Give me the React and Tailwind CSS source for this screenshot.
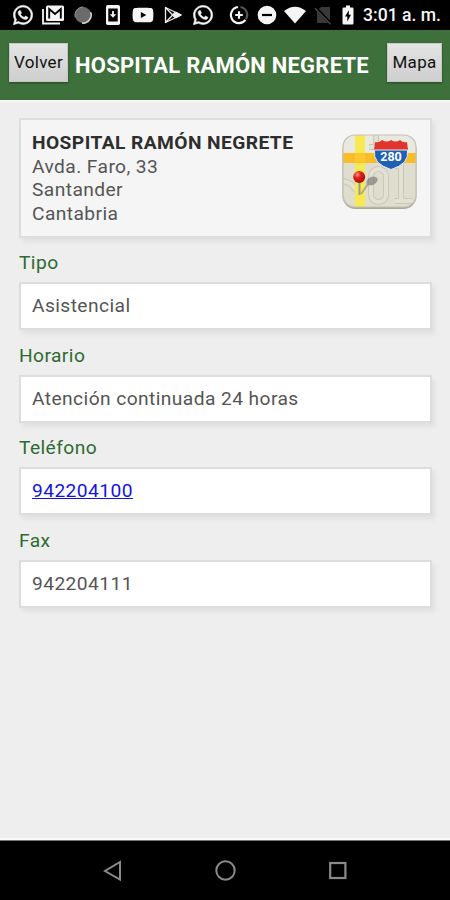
import React from "react";
import { FaWhatsapp, FaYoutube } from "react-icons/fa";

const fields = [
  { label: "Tipo", value: "Asistencial" },
  { label: "Horario", value: "Atención continuada 24 horas" },
  { label: "Teléfono", value: "942204100", phone: true },
  { label: "Fax", value: "942204111" },
];

const GmailIcon = () => (
  <svg width="22" height="22" viewBox="0 0 22 22">
    <path d="M1 5v14.5h17" fill="none" stroke="#f5f5f5" strokeWidth="1.8" />
    <rect x="4" y="1.5" width="18" height="15.5" rx="1.5" fill="#f5f5f5" />
    <path d="M7.2 14.5V5l5.8 5 5.8-5v9.5" fill="none" stroke="#000" strokeWidth="1.9" />
  </svg>
);

const SyncCircleIcon = () => (
  <svg width="20" height="20" viewBox="0 0 20 20">
    <circle cx="10" cy="10" r="8" fill="#6b6b6b" />
    <path d="M17.6 7.2A8 8 0 0 1 9 18" fill="none" stroke="#d4d4d4" strokeWidth="1.6" />
    <path d="M2.4 12.5A8 8 0 0 1 10 2" fill="none" stroke="#999" strokeWidth="1" />
  </svg>
);

const UpdateIcon = () => (
  <svg width="16" height="20" viewBox="0 0 16 20">
    <rect x="1" y="0" width="14" height="20" rx="1.8" fill="#f5f5f5" />
    <rect x="3.3" y="3.5" width="9.4" height="13" fill="#000" />
    <path d="M8 6v5" stroke="#f5f5f5" strokeWidth="1.8" />
    <path d="M4.7 9.2h6.6L8 12.8z" fill="#f5f5f5" />
  </svg>
);

const PlayStoreIcon = () => (
  <svg width="20" height="20" viewBox="0 0 20 20" fill="none" stroke="#eee" strokeWidth="1.3" strokeLinejoin="round">
    <path d="M2.5 2.5 18 10 2.5 17.5z" />
    <path d="M2.5 2.5 12.5 13M2.5 17.5 12.5 7" />
    <path d="M9.5 10 13 7.4 18 10l-5 2.6z" fill="#eee" />
  </svg>
);

const DataSaverIcon = () => (
  <svg width="20" height="20" viewBox="0 0 20 20" fill="none">
    <path d="M11.5 2A8.1 8.1 0 0 1 17 14.2" stroke="#555" strokeWidth="2.2" />
    <path d="M9 2A8.1 8.1 0 1 0 16.5 14.9" stroke="#f5f5f5" strokeWidth="2.2" />
    <path d="M10 6.2v7.6M6.2 10h7.6" stroke="#f5f5f5" strokeWidth="2.2" />
  </svg>
);

const DoNotDisturbIcon = () => (
  <svg width="20" height="20" viewBox="0 0 20 20">
    <circle cx="10" cy="10" r="9.3" fill="#f5f5f5" />
    <path d="M5 10h10" stroke="#000" strokeWidth="2.2" />
  </svg>
);

const WifiIcon = () => (
  <svg width="24" height="20" viewBox="0 0 24 20">
    <path d="M1 6Q12-2.5 23 6L12 18.5z" fill="#f5f5f5" />
  </svg>
);

const NoSimIcon = () => (
  <svg width="18" height="20" viewBox="0 0 18 20">
    <path d="M7 2h9v16H3V6z" fill="#393939" />
    <path d="M1 2l16 17" stroke="#000" strokeWidth="3" />
    <path d="M1 3.2l15.5 16" stroke="#484848" strokeWidth="1.5" />
  </svg>
);

const BatteryIcon = () => (
  <svg width="12" height="20" viewBox="0 0 12 20">
    <path d="M4 .5h4v2h2.3q1.2 0 1.2 1.2v14.6q0 1.2-1.2 1.2H1.7q-1.2 0-1.2-1.2V3.7q0-1.2 1.2-1.2H4z" fill="#f5f5f5" />
    <path d="M6.8 5.2 3 11.6h2.3v4.9L9 9.8H6.8z" fill="#000" />
  </svg>
);

const MapIcon = () => (
  <svg className="mt-[13px] mr-[11px] shrink-0 tracking-normal" width="78" height="78" viewBox="0 0 78 78">
    <defs>
      <clipPath id="tile">
        <rect x="2" y="2" width="73" height="72" rx="12" />
      </clipPath>
      <radialGradient id="pin" cx="0.35" cy="0.3" r="0.7">
        <stop offset="0" stopColor="#ff9a90" />
        <stop offset="0.4" stopColor="#e3231b" />
        <stop offset="1" stopColor="#a80d0a" />
      </radialGradient>
    </defs>
    <rect x="1.5" y="3" width="74" height="73" rx="13" fill="#aaa996" />
    <g clipPath="url(#tile)">
      <rect width="78" height="78" fill="#dfddcd" />
      <path d="M0 0h78v20H0z" fill="#eae9df" />
      <g fill="none" stroke="#c9c7b8" strokeWidth="6">
        <rect x="30" y="36" width="15" height="33" rx="7.5" />
        <path d="M50 33h10v35h-6M60 68h12M0 47l10 4 10 12M28 14h7V0" />
      </g>
      <g fill="none" stroke="#e3e1d4" strokeWidth="4">
        <rect x="30" y="36" width="15" height="33" rx="7.5" />
        <path d="M50 33h10v35h-6M60 68h12M0 47l10 4 10 12M28 14h7V0" />
      </g>
      <path d="M14 0h10v78H14z" fill="#f7e951" />
      <path d="M0 20h78v10H0z" fill="#f9bd25" />
      <path d="M14 20h10v10H14z" fill="#fbc92f" />
    </g>
    <rect x="2" y="2" width="73" height="72" rx="12" fill="none" stroke="#c4c2b4" strokeWidth="1.2" />
    <path d="M34 9q4 1 7-2 5 3 9 0 5 3 9 0 3 3 7 2l1 8H33z" fill="#e0352c" />
    <path d="M33.500 17h33q1 7-3 12-5 5-13.500 7.500-8.500-2.500-13.500-7.500-4-5-3-12z" fill="#1f5fb4" stroke="#e8edf3" strokeWidth="1" />
    <text x="50" y="28" textAnchor="middle" fill="#fff" fontFamily="Roboto, sans-serif" fontSize="12.500" fontWeight="700">
      280
    </text>
    <ellipse cx="31" cy="48" rx="6" ry="4" fill="#777" opacity="0.65" transform="rotate(-25 31 48)" />
    <path d="M20 61 27 51" stroke="#888" strokeWidth="2" opacity="0.6" />
    <path d="M18.500 47v15" stroke="#999" strokeWidth="2" />
    <circle cx="18.200" cy="44" r="6" fill="url(#pin)" />
  </svg>
);

const StatusBar = () => (
  <div className="flex h-[30px] shrink-0 items-center bg-black pl-2 text-neutral-100">
    <div className="grid w-[210px] grid-cols-7 place-items-center">
      <FaWhatsapp size={22} stroke="currentColor" strokeWidth={14} />
      <GmailIcon />
      <SyncCircleIcon />
      <UpdateIcon />
      <FaYoutube size={22} />
      <PlayStoreIcon />
      <FaWhatsapp size={22} stroke="currentColor" strokeWidth={14} />
    </div>
    <div className="ml-[7px] grid w-[112px] grid-cols-4 place-items-center">
      <DataSaverIcon />
      <DoNotDisturbIcon />
      <WifiIcon />
      <NoSimIcon />
    </div>
    <div className="ml-[5px]">
      <BatteryIcon />
    </div>
    <span className="ml-[9px] pt-px text-[17.600px] font-medium whitespace-nowrap">3:01 a. m.</span>
  </div>
);

const HeaderButton = ({ children, className }) => (
  <button
    className={`h-[39px] shrink-0 border border-[#c4cbc4] bg-linear-to-b from-[#e4e4e4] to-[#cecece] pt-px text-[17px] tracking-[0.3px] text-[#111] shadow-[0_1px_2px_rgba(0,0,0,0.4)] ${className}`}
  >
    {children}
  </button>
);

const Header = () => (
  <header className="flex h-[70px] shrink-0 items-start bg-[#3d703b] pt-[13px] pl-[9px]">
    <HeaderButton className="w-[59px]">Volver</HeaderButton>
    <h1 className="mt-[9px] ml-[7px] w-[313px] text-[22px] leading-7 font-bold tracking-[0.220px] whitespace-nowrap text-white">
      HOSPITAL RAMÓN NEGRETE
    </h1>
    <HeaderButton className="-ml-px w-[55px]">Mapa</HeaderButton>
  </header>
);

const App = () => {
  return (
    <div className="flex h-[900px] w-[450px] flex-col overflow-hidden bg-[#eee] font-['Roboto',sans-serif]">
      <StatusBar />
      <Header />
      <main className="flex-1 border-t-2 border-b-2 border-[#f8f8f8] px-[19px] pt-4 text-[19.200px] tracking-[0.420px] text-[#555]">
        <section className="flex h-[120px] w-[413px] justify-between border-2 border-[#ddd] bg-[#f5f5f5] pl-[11px] shadow-[3px_4px_5px_rgba(0,0,0,0.06)]">
          <div className="pt-[11px] leading-[23.700px]">
            <p className="font-bold text-[#2e2e2e]">HOSPITAL RAMÓN NEGRETE</p>
            <p>Avda. Faro, 33</p>
            <p>Santander</p>
            <p>Cantabria</p>
          </div>
          <MapIcon />
        </section>
        {fields.map((field) => (
          <section key={field.label} className="h-[92.600px] pt-[12px]">
            <h2 className="h-[32px] leading-[25px] text-[#2f6a31]">{field.label}</h2>
            <div className="flex h-[48px] w-[413px] items-center border-2 border-[#ddd] bg-white pt-px pl-[11px] shadow-[3px_4px_5px_rgba(0,0,0,0.06)]">
              {field.phone ? (
                <a href={`tel:${field.value}`} className="text-[#1414dc] underline">
                  {field.value}
                </a>
              ) : (
                field.value
              )}
            </div>
          </section>
        ))}
      </main>
      <nav className="flex h-[60px] shrink-0 items-center justify-center gap-[92px] border-t border-[#777] bg-black">
        <svg width="20" height="22" viewBox="0 0 20 22" fill="none" stroke="#8a8a8a" strokeWidth="2">
          <path d="M18 2v17.500L3 11z" />
        </svg>
        <svg width="22" height="22" viewBox="0 0 22 22" fill="none" stroke="#8a8a8a" strokeWidth="2">
          <circle cx="11.500" cy="10.500" r="9.200" />
        </svg>
        <svg width="20" height="22" viewBox="0 0 20 22" fill="none" stroke="#8a8a8a" strokeWidth="2.2">
          <rect x="2.200" y="3" width="15.200" height="15" />
        </svg>
      </nav>
    </div>
  );
};

export default App;
